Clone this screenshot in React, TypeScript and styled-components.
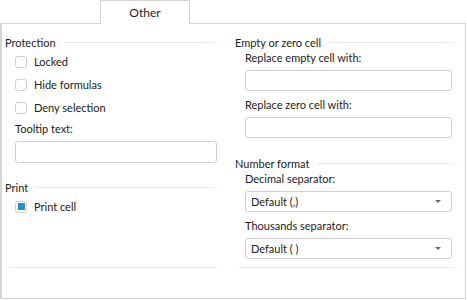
import React from 'react';
import styled, { createGlobalStyle } from 'styled-components';

const GlobalStyle = createGlobalStyle`
    html, body {
        margin: 0;
        padding: 0;
        background: #ffffff;
    }
    body {
        font-family: 'Lato', 'Liberation Sans', sans-serif;
        font-size: 11px;
        color: #222222;
    }
`;

const Dialog = styled.div`
    width: 467px;
    height: 300px;
    display: flex;
    flex-direction: column;
    box-sizing: border-box;
`;

const TabBar = styled.div`
    display: flex;
    height: 23px;
    padding-left: 100px;
    align-items: flex-end;
`;

const Tab = styled.div`
    position: relative;
    z-index: 1;
    width: 88px;
    height: 22px;
    margin-bottom: -1px;
    border: 1px solid #d2d2d0;
    border-bottom: none;
    background: #ffffff;
    display: flex;
    align-items: center;
    justify-content: center;
    padding-bottom: 1px;
    box-sizing: content-box;
    font-size: 12px;
`;

const Panel = styled.div`
    width: 466px;
    height: 276px;
    box-sizing: border-box;
    border: 1px solid #d6d6d0;
    border-left-width: 2px;
    padding: 10px 3px 0 3px;
    display: grid;
    grid-template-columns: 222px 227px;
    column-gap: 8px;
`;

const Column = styled.div`
    display: flex;
    flex-direction: column;
`;

const SectionHeader = styled.div<{ $gap?: number }>`
    display: flex;
    align-items: center;
    height: 16px;
    margin-top: ${p => p.$gap ?? 0}px;
    white-space: nowrap;

    &::after {
        content: '';
        flex: 1;
        height: 1px;
        margin-left: 8px;
        background: linear-gradient(to right, #e6e6e6 85%, rgba(230, 230, 230, 0));
    }
`;

const Indent = styled.div`
    display: flex;
    flex-direction: column;
    padding-left: 10px;
    padding-right: 10px;
`;

const CheckRow = styled.label`
    display: flex;
    align-items: center;
    height: 23px;
    gap: 7px;
`;

const CheckBox = styled.span<{ $checked?: boolean }>`
    width: 10px;
    height: 10px;
    border: 1px solid #d0d0d0;
    border-radius: 3px;
    background: #fff;
    display: flex;
    align-items: center;
    justify-content: center;

    &::before {
        content: '';
        display: ${p => (p.$checked ? 'block' : 'none')};
        width: 7px;
        height: 7px;
        background: #2a8dd4;
    }
`;

const FieldLabel = styled.div<{ $gap?: number }>`
    height: 16px;
    line-height: 16px;
    margin-top: ${p => p.$gap ?? 0}px;
    white-space: nowrap;
`;

const TextBox = styled.div<{ $h?: number; $gap?: number }>`
    height: ${p => p.$h ?? 21}px;
    margin-top: ${p => p.$gap ?? 4}px;
    border: 1px solid #d0d0d0;
    border-radius: 3px;
    box-sizing: border-box;
    background: #fff;
`;

const Select = styled.div<{ $gap?: number }>`
    height: 21px;
    margin-top: ${p => p.$gap ?? 4}px;
    border: 1px solid #d0d0d0;
    border-radius: 3px;
    box-sizing: border-box;
    display: flex;
    align-items: center;
    justify-content: space-between;
    padding: 0 10px 0 5px;
`;

const Caret = styled.span`
    width: 0;
    height: 0;
    border-left: 3px solid transparent;
    border-right: 3px solid transparent;
    border-top: 3px solid #6a6a6a;
`;

const Spacer = styled.div`
    flex: 1;
`;

const Separator = styled.div`
    height: 1px;
    margin-bottom: 30px;
    background: linear-gradient(to right, rgba(230,230,230,0.3), #e6e6e6 5%, #e6e6e6 92%, rgba(230,230,230,0));
`;

const Check: React.FC<{ label: string; checked?: boolean }> = ({ label, checked }) => (
    <CheckRow>
        <CheckBox $checked={checked} />
        {label}
    </CheckRow>
);

const App: React.FC = () => (
    <Dialog>
        <GlobalStyle />
        <TabBar>
            <Tab>Other</Tab>
        </TabBar>
        <Panel>
            <Column>
                <SectionHeader>Protection</SectionHeader>
                <Indent>
                    <Check label="Locked" />
                    <Check label="Hide formulas" />
                    <Check label="Deny selection" />
                    <FieldLabel $gap={2}>Tooltip text:</FieldLabel>
                    <TextBox $h={22} $gap={4} />
                </Indent>
                <SectionHeader $gap={16}>Print</SectionHeader>
                <Indent>
                    <Check label="Print cell" checked />
                </Indent>
                <Spacer />
                <Separator />
            </Column>
            <Column>
                <SectionHeader>Empty or zero cell</SectionHeader>
                <Indent>
                    <FieldLabel>Replace empty cell with:</FieldLabel>
                    <TextBox />
                    <FieldLabel $gap={6}>Replace zero cell with:</FieldLabel>
                    <TextBox />
                </Indent>
                <SectionHeader $gap={17}>Number format</SectionHeader>
                <Indent>
                    <FieldLabel>Decimal separator:</FieldLabel>
                    <Select>
                        <span>Default (,)</span>
                        <Caret />
                    </Select>
                    <FieldLabel $gap={6}>Thousands separator:</FieldLabel>
                    <Select>
                        <span>Default ( )</span>
                        <Caret />
                    </Select>
                </Indent>
                <Spacer />
                <Separator />
            </Column>
        </Panel>
    </Dialog>
);

export default App;
